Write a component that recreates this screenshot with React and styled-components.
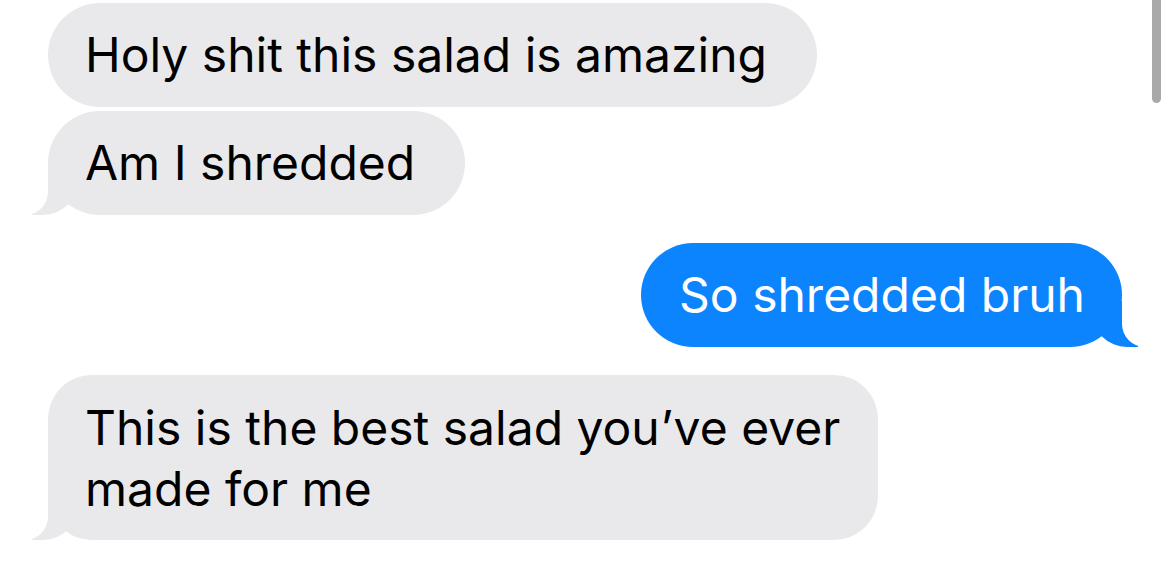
import styled, { createGlobalStyle, css } from "styled-components";

const GlobalStyle = createGlobalStyle`
  html, body {
    margin: 0;
    padding: 0;
    background: #ffffff;
  }
  body {
    font-family: Inter, "Liberation Sans", sans-serif;
    -webkit-font-smoothing: antialiased;
  }
`;

const Thread = styled.div`
  position: relative;
  width: 1170px;
  height: 562px;
  overflow: hidden;
  box-sizing: border-box;
  padding: 3px 48px 0;
  display: flex;
  flex-direction: column;
`;

const Group = styled.div`
  display: flex;
  flex-direction: column;
  align-items: ${(p) => (p.$mine ? "flex-end" : "flex-start")};
  gap: 4px;
  margin-bottom: 28px;
`;

const Bubble = styled.div`
  position: relative;
  box-sizing: border-box;
  padding: ${(p) => (p.$mine ? "22px 37px 22px 38px" : "22px 50px 22px 37px")};
  border-radius: 52px;
  font-size: 48px;
  line-height: 60px;
  letter-spacing: 0;
  white-space: pre-line;
  background: ${(p) => (p.$mine ? "#0b84fe" : "#e9e9eb")};
  color: ${(p) => (p.$mine ? "#ffffff" : "#000000")};

  ${(p) =>
    p.$multi &&
    css`
      border-radius: 44px;
      padding: 22px 38px 21px 37px;
      line-height: 61px;
    `}

  ${(p) =>
    p.$tail &&
    css`
      &::before,
      &::after {
        content: "";
        position: absolute;
        bottom: 0;
        height: 46px;
      }
      &::before {
        z-index: 0;
        width: 46px;
        background: ${p.$mine ? "#0b84fe" : "#e9e9eb"};
        ${p.$mine
          ? css`right: -16px; border-bottom-left-radius: 35px;`
          : css`left: -16px; border-bottom-right-radius: 35px;`}
      }
      &::after {
        z-index: 1;
        width: 23px;
        background: #ffffff;
        ${p.$mine
          ? css`right: -23px; border-bottom-left-radius: 23px;`
          : css`left: -23px; border-bottom-right-radius: 23px;`}
      }
    `}
`;

const Text = styled.span`
  position: relative;
  z-index: 2;
`;

const Scrollbar = styled.div`
  position: absolute;
  top: 0;
  right: 9px;
  width: 9px;
  height: 103px;
  border-radius: 0 0 5px 5px;
  background: #a9a9a9;
`;

const messages = [
  { mine: false, lines: ["Holy shit this salad is amazing", "Am I shredded"] },
  { mine: true, lines: ["So shredded bruh"] },
  { mine: false, lines: ["This is the best salad you’ve ever\nmade for me"] },
];

export default function App() {
  return (
    <>
      <GlobalStyle />
      <Thread>
        {messages.map((group, gi) => (
          <Group key={gi} $mine={group.mine}>
            {group.lines.map((line, li) => (
              <Bubble
                key={li}
                $mine={group.mine}
                $tail={li === group.lines.length - 1}
                $multi={line.includes("\n")}
              >
                <Text>{line}</Text>
              </Bubble>
            ))}
          </Group>
        ))}
        <Scrollbar />
      </Thread>
    </>
  );
}
